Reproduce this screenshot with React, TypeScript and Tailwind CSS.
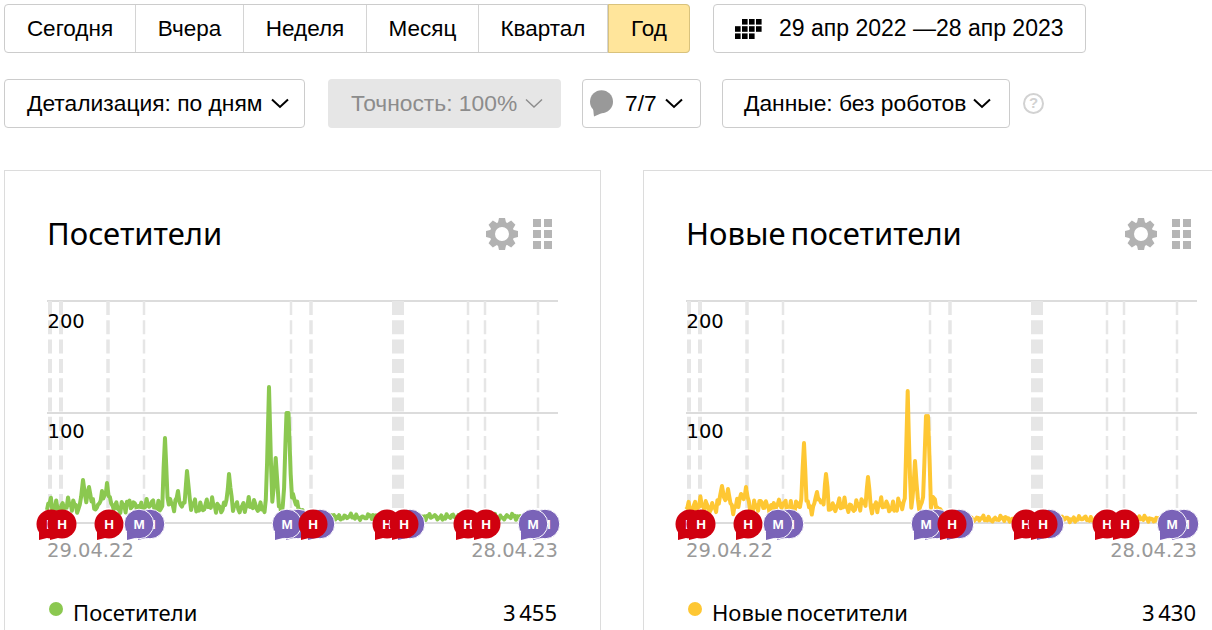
import React from "react";

const arial = { fontFamily: '"Liberation Sans", Arial, sans-serif' };

function Chevron({ cls, thin }: { cls: string; thin?: boolean }) {
  return (
    <svg width="18" height="11" viewBox="0 0 18 11" className={cls} fill="none" stroke="currentColor" strokeWidth={thin ? 1.4 : 2}>
      <path d="M1 1.5 L9 9 L17 1.5" />
    </svg>
  );
}

function CalendarIcon() {
  const cells: [number, number][] = [
    [1, 0], [2, 0], [3, 0],
    [0, 1], [1, 1], [2, 1], [3, 1],
    [0, 2], [1, 2], [2, 2],
  ];
  return (
    <svg width="27" height="20" viewBox="0 0 27 20" fill="#000">
      {cells.map(([c, r]) => (
        <rect key={`${c}-${r}`} x={c * 7} y={r * 7.2} width="5.6" height="5.6" />
      ))}
    </svg>
  );
}

function Seg({ cls, children }: { cls: string; children: React.ReactNode }) {
  return <div className={`flex items-center justify-center ${cls}`}>{children}</div>;
}

function Gear() {
  const teeth = [0, 45, 90, 135, 180, 225, 270, 315];
  return (
    <svg width="34" height="34" viewBox="-17 -17 34 34" fill="#b2b2b2">
      {teeth.map((a) => (
        <path key={a} d="M-3 -16 L3 -16 L4.4 -10 L-4.4 -10 Z" transform={`rotate(${a})`} />
      ))}
      <circle r="9.6" fill="none" stroke="#b2b2b2" strokeWidth="5.2" />
    </svg>
  );
}

function GridIcon() {
  return (
    <div className="grid grid-cols-2 gap-[3px]">
      {[0, 1, 2, 3, 4, 5].map((i) => (
        <div key={i} className="h-[8px] w-[8px] bg-[#b5b5b5]" />
      ))}
    </div>
  );
}

type Peak = [number, number];

function buildLine(peaks: Peak[], endX: number, seed: number, lowY: number) {
  const pts: [number, number][] = [];
  const step = 1.31;
  for (let x = 47, i = 0; x <= endX; x += step, i++) {
    const n =
      Math.sin(i * 1.37 + seed) * 3.2 +
      Math.sin(i * 2.91 + seed * 2) * 2.6 +
      Math.sin(i * 0.41 + seed * 3) * 1.8;
    let y: number;
    if (x < 298) y = 506 + n * 1.25;
    else if (x < 306) y = 506 + ((x - 298) / 8) * (lowY - 506) + n * 0.5;
    else y = lowY + n * 0.5;
    let skip = false;
    for (const [px, py] of peaks) {
      const d = Math.abs(x - px);
      if (d < 0.9) skip = true;
      else if (d < 3) y = Math.min(y, py + (d / 3) * (y - py));
    }
    if (!skip) pts.push([x, y]);
  }
  for (const p of peaks) pts.push(p);
  pts.sort((a, b) => a[0] - b[0]);
  return pts.map(([x, y]) => `${x.toFixed(1)},${y.toFixed(1)}`).join(" ");
}

const greenPeaks: Peak[] = [
  [83, 480], [89, 487], [102, 491], [107, 483], [165, 438], [178, 491], [187, 471],
  [229, 474], [269, 387], [275.7, 458], [286.5, 413], [288.5, 413], [293, 494],
];
const yellowPeaks: Peak[] = [
  [83, 486], [89, 489], [102, 494], [107, 487], [165, 443], [178, 492], [187, 474],
  [229, 477], [268.7, 391], [276, 461], [287, 416], [289, 416], [294, 497],
];

const vlines: [number, number][] = [
  [50, 4], [61, 4], [108, 3.5], [144, 2.5], [291, 2.5], [311, 3.5], [398, 12], [468, 2.5], [485, 2.5], [538, 2.5],
];

type Mark = [number, "r" | "p"];
const marks: Mark[] = [
  [51, "r"], [62, "r"], [109, "r"], [150, "p"], [139, "p"], [298, "p"], [287, "p"], [320, "p"], [313, "r"],
  [387, "r"], [410, "p"], [404, "r"], [468, "r"], [486, "r"], [545, "p"], [533, "p"],
];

function Marker({ x, kind }: { x: number; kind: "r" | "p" }) {
  const fill = kind === "r" ? "#d0000f" : "#7a63b8";
  return (
    <g>
      <circle
        cx={x}
        cy={524}
        r={kind === "p" ? 14.8 : 14.5}
        fill={fill}
        stroke={kind === "p" ? "#ffffff" : "none"}
        strokeWidth={kind === "p" ? 1 : 0}
      />
      <path d={`M${x - 12} ${530} L${x - 12} ${540} L${x - 2} ${537.5} Z`} fill={fill} />
      <text
        x={x}
        y={529}
        textAnchor="middle"
        fill="#ffffff"
        fontSize="13.5"
        fontWeight="700"
        fontFamily='"Liberation Sans", Arial, sans-serif'
      >
        {kind === "r" ? "Н" : "М"}
      </text>
    </g>
  );
}

function Chart({ color, peaks, endX, seed, lowY }: { color: string; peaks: Peak[]; endX: number; seed: number; lowY: number }) {
  const dv = '"DejaVu Sans", Verdana, sans-serif';
  return (
    <svg width="595" height="270" viewBox="5 290 595 270" className="mt-[36px] block shrink-0">
      {[301, 413, 523].map((y) => (
        <line key={y} x1="47" x2="558" y1={y} y2={y} stroke="#dcdcdc" strokeWidth="2" />
      ))}
      {vlines.map(([x, w]) => (
        <line key={x} x1={x} x2={x} y1="301" y2="523" stroke="#e6e6e6" strokeWidth={w} strokeDasharray="14 5.3" />
      ))}
      <polyline points={buildLine(peaks, endX, seed, lowY)} fill="none" stroke={color} strokeWidth="4" strokeLinejoin="round" />
      <text x="47.5" y="328" fontSize="19.5" fill="#000" fontFamily={dv}>200</text>
      <text x="47.5" y="438" fontSize="19.5" fill="#000" fontFamily={dv}>100</text>
      {marks.map(([x, k], i) => (
        <Marker key={i} x={x} kind={k} />
      ))}
      <text x="47" y="557" fontSize="19.5" fill="#999999" fontFamily={dv}>29.04.22</text>
      <text x="558" y="557" textAnchor="end" fontSize="19.5" fill="#999999" fontFamily={dv}>28.04.23</text>
    </svg>
  );
}

function Card(props: { title: string; legend: string; value: string; color: string; dot: string; peaks: Peak[]; endX: number; seed: number; lowY: number }) {
  return (
    <div className="h-[520px] w-[597px] shrink-0 border border-[#dcdcdc]" style={{ fontFamily: '"Noto Sans", sans-serif' }}>
      <div className="mt-[41px] flex h-[42px] items-center justify-between pl-[42px] pr-[48px]">
        <div className="text-[31px] leading-none text-black [word-spacing:-3px]">{props.title}</div>
        <div className="mt-[2px] flex items-center gap-[14px]">
          <Gear />
          <GridIcon />
        </div>
      </div>
      <Chart color={props.color} peaks={props.peaks} endX={props.endX} seed={props.seed} lowY={props.lowY} />
      <div className="mt-[39px] flex h-[26px] items-center justify-between pl-[44px] pr-[43px] text-[22px] text-black [word-spacing:-2px]">
        <div className="flex items-center gap-[10px]">
          <div className="mt-[-6px] h-[14px] w-[14px] rounded-full" style={{ backgroundColor: props.dot }} />
          <span>{props.legend}</span>
        </div>
        <span>{props.value}</span>
      </div>
    </div>
  );
}

export default function App() {
  return (
    <div className="h-[630px] w-[1212px] overflow-hidden bg-white pl-[4px] pt-[4px] text-[22.8px] text-black" style={arial}>
      <div className="flex h-[49px]">
        <div className="flex h-full w-[686px] rounded-[4px] border border-[#cccccc] text-[22.5px]">
          <Seg cls="w-[131px] border-r border-[#d4d4d4]">Сегодня</Seg>
          <Seg cls="w-[108px] border-r border-[#d4d4d4]">Вчера</Seg>
          <Seg cls="w-[123px] border-r border-[#d4d4d4]">Неделя</Seg>
          <Seg cls="w-[112px] border-r border-[#d4d4d4]">Месяц</Seg>
          <Seg cls="w-[129px] border-r border-[#d4d4d4]">Квартал</Seg>
          <Seg cls="-my-px -mr-px flex-1 rounded-r-[4px] border border-[#d9c27c] bg-[#ffe59b]">Год</Seg>
        </div>
        <div className="ml-[23px] flex h-full w-[373px] items-center rounded-[4px] border border-[#cccccc] pl-[21px] text-[23px]">
          <CalendarIcon />
          <span className="ml-[17px] whitespace-pre">29 апр 2022 —28 апр 2023</span>
        </div>
      </div>
      <div className="mt-[26px] flex h-[49px] items-center">
        <div className="flex h-full w-[301px] items-center rounded-[4px] border border-[#cccccc] pl-[22px]">
          <span>Детализация: по дням</span>
          <Chevron cls="ml-[9px] text-black" />
        </div>
        <div className="ml-[23px] flex h-full w-[233px] items-center rounded-[4px] bg-[#e6e6e6] pl-[23px] text-[#8c8c8c]">
          <span>Точность: 100%</span>
          <Chevron thin cls="ml-[8px] text-[#8c8c8c]" />
        </div>
        <div className="ml-[21px] flex h-full w-[119px] items-center rounded-[4px] border border-[#cccccc] pl-[7px]">
          <svg width="24" height="27" viewBox="0 0 24 27" fill="#999999">
            <circle cx="11.5" cy="11.7" r="11.5" />
            <path d="M3 18 L4 26.5 L12 23 Z" />
          </svg>
          <span className="ml-[11px]">7/7</span>
          <Chevron cls="ml-[8px] text-black" />
        </div>
        <div className="ml-[21px] flex h-full w-[288px] items-center rounded-[4px] border border-[#cccccc] pl-[21px]">
          <span>Данные: без роботов</span>
          <Chevron cls="ml-[7px] text-black" />
        </div>
        <div className="ml-[13px] flex h-[21px] w-[21px] shrink-0 items-center justify-center rounded-full border-2 border-[#d2d2d2] text-[15px] font-bold text-[#d2d2d2]">?</div>
      </div>
      <div className="mt-[42px] flex gap-[42px]">
        <Card title="Посетители" legend="Посетители" value="3 455" color="#8bc850" dot="#8bc850" peaks={greenPeaks} endX={525} seed={1.3} lowY={517} />
        <Card title="Новые посетители" legend="Новые посетители" value="3 430" color="#fec733" dot="#fec733" peaks={yellowPeaks} endX={525} seed={2.1} lowY={519} />
      </div>
    </div>
  );
}
